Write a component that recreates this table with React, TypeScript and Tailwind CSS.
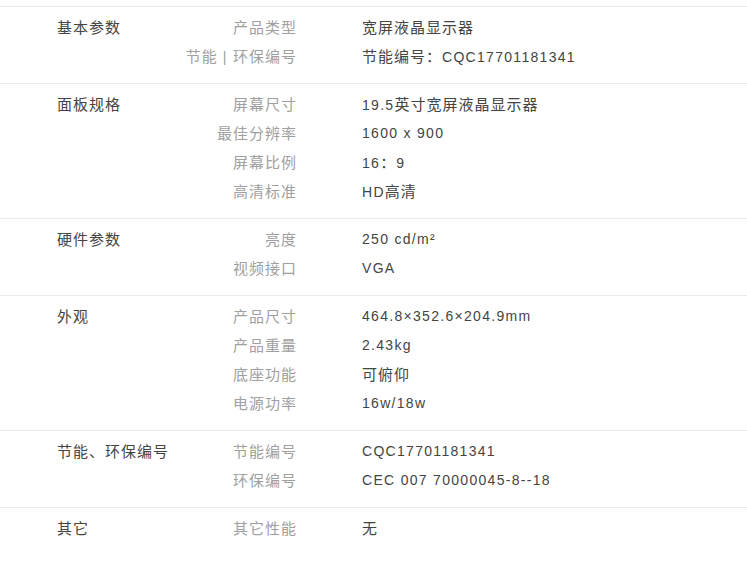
type Row = { k: string; v: string };
type Section = { title: string; rows: Row[] };

const sections: Section[] = [
  {
    title: "基本参数",
    rows: [
      { k: "产品类型", v: "宽屏液晶显示器" },
      { k: "节能 | 环保编号", v: "节能编号：CQC17701181341" },
    ],
  },
  {
    title: "面板规格",
    rows: [
      { k: "屏幕尺寸", v: "19.5英寸宽屏液晶显示器" },
      { k: "最佳分辨率", v: "1600 x 900" },
      { k: "屏幕比例", v: "16：9" },
      { k: "高清标准", v: "HD高清" },
    ],
  },
  {
    title: "硬件参数",
    rows: [
      { k: "亮度", v: "250 cd/m²" },
      { k: "视频接口", v: "VGA" },
    ],
  },
  {
    title: "外观",
    rows: [
      { k: "产品尺寸", v: "464.8×352.6×204.9mm" },
      { k: "产品重量", v: "2.43kg" },
      { k: "底座功能", v: "可俯仰" },
      { k: "电源功率", v: "16w/18w" },
    ],
  },
  {
    title: "节能、环保编号",
    rows: [
      { k: "节能编号", v: "CQC17701181341" },
      { k: "环保编号", v: "CEC 007 70000045-8--18" },
    ],
  },
  {
    title: "其它",
    rows: [{ k: "其它性能", v: "无" }],
  },
];

const cjk = /[\u3000-\u303f\u4e00-\u9fff\uff00-\uffef]/;

// chinese runs are rendered a bit larger than latin ones
const Mixed = ({ text }: { text: string }) => {
  const parts = text.split(/([\u3000-\u303f\u4e00-\u9fff\uff00-\uffef]+)/);
  return (
    <>
      {parts.map((p, i) =>
        cjk.test(p) ? (
          <span key={i} className="text-[15px] tracking-[1px]">
            {p}
          </span>
        ) : (
          <span key={i} className="tracking-[1.3px]">
            {p}
          </span>
        )
      )}
    </>
  );
};

const App = () => {
  return (
    <div
      className="bg-white w-[747px] h-[561px] overflow-hidden pt-[6px] text-[14px] leading-[29px]"
      style={{ fontFamily: '"Liberation Sans", "Noto Sans CJK SC", sans-serif' }}
    >
      {sections.map((s) => (
        <div key={s.title} className="flex border-t border-[#ebebeb] pt-[6px] pb-[12px] pl-[57px]">
          {/* section title */}
          <div className="w-[140px] text-[#444] whitespace-nowrap">
            <Mixed text={s.title} />
          </div>
          {/* rows */}
          <div className="flex flex-col">
            {s.rows.map((r) => (
              <div key={r.k} className="flex h-[29px]">
                <div className="w-[100px] flex justify-end text-[#a0a0a0] whitespace-nowrap">
                  <div>
                    <Mixed text={r.k} />
                  </div>
                </div>
                <div className="ml-[65px] text-[#444] whitespace-nowrap">
                  <Mixed text={r.v} />
                </div>
              </div>
            ))}
          </div>
        </div>
      ))}
    </div>
  );
};

export default App;
